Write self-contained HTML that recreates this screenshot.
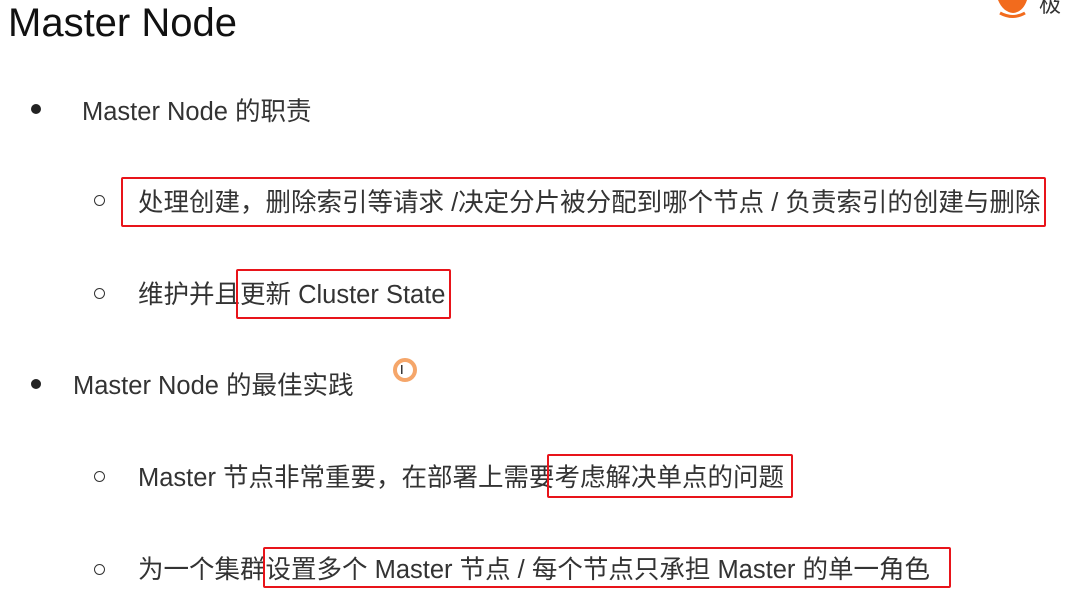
<!DOCTYPE html>
<html><head><meta charset="utf-8"><style>
body{margin:0;width:1070px;height:604px;background:#fff;position:relative;overflow:hidden;font-family:"Liberation Sans","Noto Sans CJK SC",sans-serif;color:#333}
.t{position:absolute;white-space:nowrap;font-size:25.5px;line-height:30px}
.box{position:absolute;border:2px solid #e8141a;border-radius:2px}
.dot{position:absolute;width:10px;height:10px;border-radius:50%;background:#222}
.circ{position:absolute;width:9px;height:9px;border-radius:50%;border:1.5px solid #333}
</style></head><body>
<div class="t" style="left:8px;top:1px;font-size:40px;line-height:44px;color:#111">Master Node</div>
<svg style="position:absolute;left:995px;top:0" width="75" height="20"><path d="M3 0 Q8 12 18 13 Q28 12 32 0 Z" fill="#f26b1d"/><path d="M5 13 Q18 20 30 13" stroke="#f26b1d" stroke-width="3" fill="none"/><text x="44" y="12" font-size="22" fill="#333" font-family="Noto Sans CJK SC">极</text></svg>
<div class="dot" style="left:31px;top:104px"></div>
<div class="t" style="left:82px;top:97px">Master Node 的职责</div>
<div class="circ" style="left:94px;top:195px"></div>
<div class="t" style="left:138px;top:188px">处理创建，删除索引等请求 /决定分片被分配到哪个节点 / 负责索引的创建与删除</div>
<div class="box" style="left:121px;top:177px;width:921px;height:46px"></div>
<div class="circ" style="left:94px;top:288px"></div>
<div class="t" style="left:138px;top:280px">维护并且更新 Cluster State</div>
<div class="box" style="left:236px;top:269px;width:211px;height:46px"></div>
<div class="dot" style="left:31px;top:379px"></div>
<div class="t" style="left:73px;top:371px">Master Node 的最佳实践</div>
<div style="position:absolute;left:393px;top:358px;width:16px;height:16px;border-radius:50%;border:4px solid #f5a66a;background:#fff"></div>
<div class="t" style="left:400px;top:362px;font-size:13px;line-height:16px;color:#000">I</div>
<div class="circ" style="left:94px;top:471px"></div>
<div class="t" style="left:138px;top:463px">Master 节点非常重要，在部署上需要考虑解决单点的问题</div>
<div class="box" style="left:547px;top:454px;width:242px;height:40px"></div>
<div class="circ" style="left:94px;top:564px"></div>
<div class="t" style="left:138px;top:555px">为一个集群设置多个 Master 节点 / 每个节点只承担 Master 的单一角色</div>
<div class="box" style="left:263px;top:547px;width:684px;height:37px"></div>
</body></html>
